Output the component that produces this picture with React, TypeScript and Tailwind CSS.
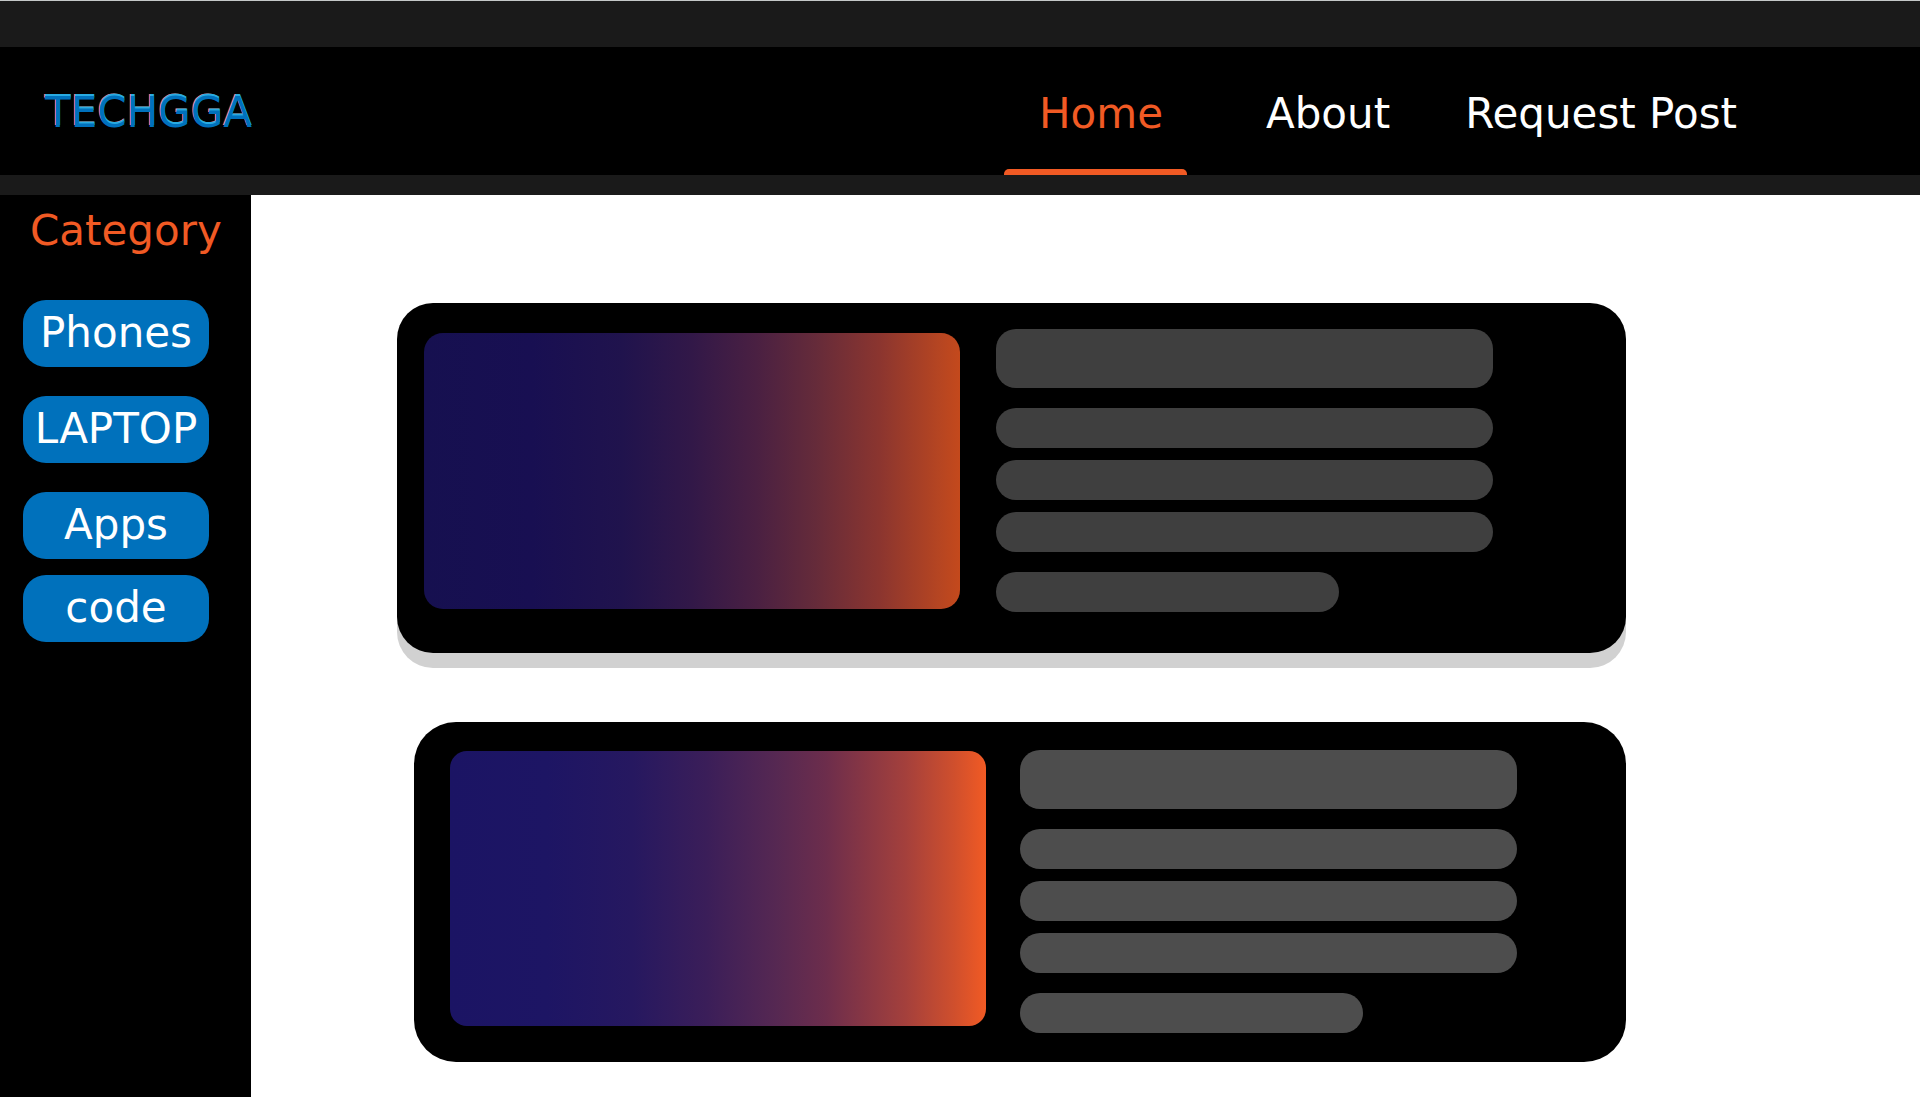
const navLinks = ["About", "Request Post"];
const categories = ["Phones", "LAPTOP", "Apps"];

function PostLines({ tone }: { tone: string }) {
  return (
    <div className="flex min-w-0 flex-1 flex-col gap-5">
      <div className={`h-[59px] rounded-[20px] ${tone}`} />
      <div className="flex flex-col gap-3">
        <div className={`h-10 rounded-[20px] ${tone}`} />
        <div className={`h-10 rounded-[20px] ${tone}`} />
        <div className={`h-10 rounded-[20px] ${tone}`} />
      </div>
      <div className={`h-10 w-[69%] rounded-[20px] ${tone}`} />
    </div>
  );
}

function CategoryButton({ label }: { label: string }) {
  return (
    <button
      type="button"
      className="flex h-[67px] w-full items-center justify-center rounded-[23px] bg-[#0071bc] pb-0.5 leading-[48px] text-white"
    >
      {label}
    </button>
  );
}

export default function App() {
  return (
    <div className="flex min-h-screen flex-col bg-white font-['DejaVu_Sans',sans-serif] text-[42px]">
      <div className="h-[47px] border-t border-[#c4c8c8] bg-[#1a1a1a]" />
      <header className="flex h-32 items-stretch justify-between bg-black pr-[183px] pl-[45px]">
        <a
          href="#"
          className="self-center pt-1 leading-[48px] text-[#0071bc] [text-shadow:0_-2px_0_#29abe2,-1px_-2px_0_#f15a24]"
        >
          TECHGGA
        </a>
        <nav className="flex items-stretch whitespace-nowrap text-white">
          <a
            href="#"
            aria-current="page"
            className="relative mr-[79px] flex w-[183px] items-center pt-1 pl-[35px] text-[#f15a24]"
          >
            Home
            <span className="absolute inset-x-0 bottom-0 h-1.5 rounded-t-[5px] bg-[#f15a24]" />
          </a>
          <div className="flex items-center gap-[75px] pt-1">
            {navLinks.map((label) => (
              <a key={label} href="#">
                {label}
              </a>
            ))}
          </div>
        </nav>
      </header>
      <div className="h-5 bg-[#1a1a1a]" />
      <div className="flex flex-1">
        <aside className="w-[251px] shrink-0 bg-black pt-3 pr-[42px] pl-[23px]">
          <h2 className="pl-[7px] leading-[48px] text-[#f15a24]">Category</h2>
          <div className="mt-[45px] flex flex-col gap-[29px]">
            {categories.map((label) => (
              <CategoryButton key={label} label={label} />
            ))}
          </div>
          <div className="mt-4">
            <CategoryButton label="code" />
          </div>
        </aside>
        <main className="flex min-w-0 flex-1 flex-col gap-[69px] pt-[108px] pr-[294px] pb-[34px] pl-[146px]">
          <article className="flex gap-9 rounded-[36px] bg-black pt-[26px] pr-[133px] pb-[41px] pl-[27px] shadow-[0_15px_0_#d1d1d1]">
            <div className="mt-1 h-[276px] w-[536px] rounded-[19px] bg-[linear-gradient(90deg,#161050_0%,#180f52_20%,#20134d_37%,#321848_50%,#4a2042_62%,#652b3a_73%,#8b352f_85%,#b54522_96%,#c4491c_100%)]" />
            <PostLines tone="bg-[#3f3f3f]" />
          </article>
          <article className="ml-[17px] flex gap-[34px] rounded-[42px] bg-black pt-7 pr-[109px] pb-[29px] pl-9">
            <div className="mt-px h-[275px] w-[536px] rounded-[17px] bg-[linear-gradient(90deg,#1b1464_0%,#1d1564_18%,#261860_34%,#3b1e59_48%,#562852_61%,#6c2d4c_70%,#a4403c_85%,#cf4f2d_94%,#f15a24_100%)]" />
            <PostLines tone="bg-[#4d4d4d]" />
          </article>
        </main>
      </div>
    </div>
  );
}
